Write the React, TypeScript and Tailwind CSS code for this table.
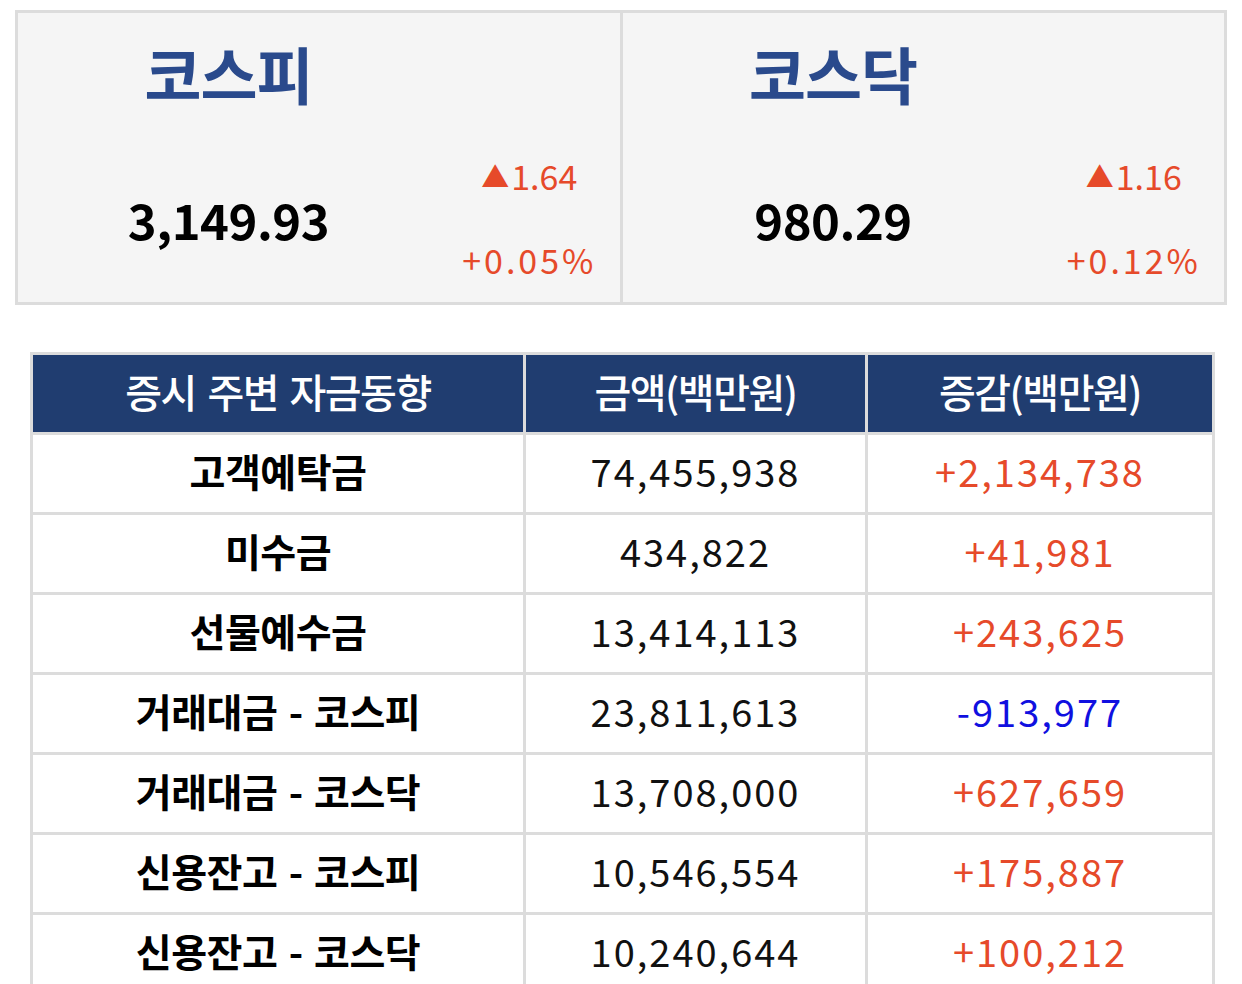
const font = { fontFamily: '"Noto Sans CJK KR", "Noto Sans", sans-serif' }

type IndexProps = {
  name: string
  value: string
  change: string
  rate: string
}

function IndexPanel({ name, value, change, rate }: IndexProps) {
  return (
    <div className="flex-1 flex flex-col">
      <div className="h-[128px] flex items-center pb-[8px]">
        <div className="w-[70%] text-center text-[62px] font-bold tracking-[-1px] text-[#2a4a8c] leading-none">
          {name}
        </div>
      </div>
      <div className="flex flex-1">
        <div className="w-[70%] flex items-center justify-center pb-[6px] text-[49px] font-bold tracking-[-0.5px] text-black leading-none">
          {value}
        </div>
        <div className="w-[30%] flex flex-col text-[#e64a2a] text-[34px] leading-none">
          <div className="h-[78px] flex items-center justify-center pb-[8px]">
            <span className="text-[28px] mr-[2px]">▲</span>
            {change}
          </div>
          <div className="flex-1 flex items-center justify-center tracking-[3px] pb-[2px]">
            {rate}
          </div>
        </div>
      </div>
    </div>
  )
}

const rows = [
  { label: '고객예탁금', amount: '74,455,938', diff: '+2,134,738' },
  { label: '미수금', amount: '434,822', diff: '+41,981' },
  { label: '선물예수금', amount: '13,414,113', diff: '+243,625' },
  { label: '거래대금 - 코스피', amount: '23,811,613', diff: '-913,977' },
  { label: '거래대금 - 코스닥', amount: '13,708,000', diff: '+627,659' },
  { label: '신용잔고 - 코스피', amount: '10,546,554', diff: '+175,887' },
  { label: '신용잔고 - 코스닥', amount: '10,240,644', diff: '+100,212' },
]

const cell = 'border-[3px] border-[#dcdcdc] text-center pb-[6px]'

export default function App() {
  return (
    <div className="bg-white w-[1242px] h-[984px] overflow-hidden" style={font}>
      <div className="ml-[15px] mt-[10px] w-[1212px] h-[295px] flex border-[3px] border-[#dcdcdc] bg-[#f5f5f5]">
        <IndexPanel name="코스피" value="3,149.93" change="1.64" rate="+0.05%" />
        <div className="w-[3px] bg-[#dcdcdc]" />
        <IndexPanel name="코스닥" value="980.29" change="1.16" rate="+0.12%" />
      </div>

      <table className="ml-[30px] mt-[47px] w-[1182px] border-collapse table-fixed">
        <colgroup>
          <col className="w-[493px]" />
          <col className="w-[342px]" />
          <col className="w-[347px]" />
        </colgroup>
        <thead>
          <tr className="bg-[#203d70] text-white text-[40px] h-[80px]">
            <th className={cell + ' font-medium tracking-[-1.5px] [word-spacing:4px]'}>증시 주변 자금동향</th>
            <th className={cell + ' font-medium tracking-[-1.5px]'}>금액(백만원)</th>
            <th className={cell + ' font-medium tracking-[-1.5px]'}>증감(백만원)</th>
          </tr>
        </thead>
        <tbody>
          {rows.map((r) => (
            <tr key={r.label} className="h-[80px] text-[38px]">
              <td className={cell + ' text-[39px] font-bold tracking-[-0.5px] [word-spacing:3px] text-black'}>
                {r.label}
              </td>
              <td className={cell + ' text-[#111] tracking-[2px]'}>{r.amount}</td>
              <td
                className={
                  r.diff.startsWith('-')
                    ? cell + ' text-[#1010e0] tracking-[2px]'
                    : cell + ' text-[#e64a2a] tracking-[2px]'
                }
              >
                {r.diff}
              </td>
            </tr>
          ))}
        </tbody>
      </table>
    </div>
  )
}
